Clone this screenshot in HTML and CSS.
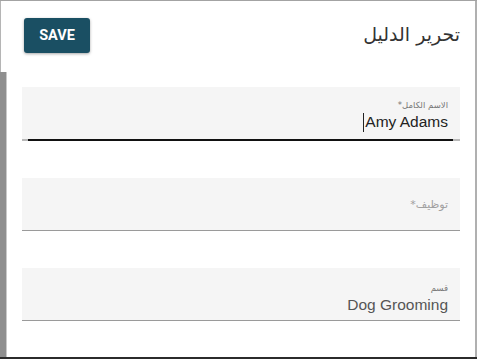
FILE: index.html
```html
<!DOCTYPE html>
<html lang="ar">
<head>
<meta charset="utf-8">
<link rel="stylesheet" href="styles.css">
</head>
<body>
<div class="frame">
  <div class="strip">
    <div class="strip-top"></div>
    <div class="strip-bottom"></div>
  </div>
  <div class="dialog">
    <div class="header">
      <button class="save">SAVE</button>
      <h1 class="title" dir="rtl">تحرير الدليل</h1>
    </div>
    <div class="fields">
      <div class="field focused" dir="rtl">
        <div class="field-body">
          <div class="label">الاسم الكامل*</div>
          <div class="value"><span dir="ltr" class="ltr"><span class="caret"></span>Amy Adams</span></div>
        </div>
        <div class="underline"><div class="underline-active"></div></div>
      </div>
      <div class="field" dir="rtl">
        <div class="field-body center">
          <div class="placeholder">توظيف*</div>
        </div>
      </div>
      <div class="field" dir="rtl">
        <div class="field-body">
          <div class="label">قسم</div>
          <div class="value muted"><span dir="ltr" class="ltr">Dog Grooming</span></div>
        </div>
      </div>
    </div>
  </div>
</div>
</body>
</html>
```

FILE: styles.css
```css
html, body {
  margin: 0;
  padding: 0;
  background: #fff;
}
body {
  width: 477px;
  height: 359px;
  overflow: hidden;
  font-family: "Liberation Sans", "DejaVu Sans", Arial, sans-serif;
}
.frame {
  display: flex;
  height: 359px;
  box-sizing: border-box;
  border-top: 1px solid #a3a3a3;
  border-bottom: 2px solid #2b2b2b;
}
.strip {
  width: 7px;
  display: flex;
  flex-direction: column;
}
.strip-top {
  height: 71px;
  border-left: 1px solid #b5b5b5;
  background: #fff;
}
.strip-bottom {
  flex: 1;
  background: #8f8f8f;
  border-right: 1px solid #c9c9c9;
}
.dialog {
  flex: 1;
  padding: 17px 15px 0 15px;
  border-right: 2px solid #b0b0b0;
  background: #fff;
}
.header {
  display: flex;
  justify-content: space-between;
  align-items: center;
  height: 35px;
  padding-left: 2px;
}
.save {
  width: 66px;
  height: 35px;
  border: none;
  border-radius: 3px;
  background: #1a4f63;
  color: #fff;
  font-family: Roboto, "Liberation Sans", sans-serif;
  font-weight: 700;
  font-size: 14.5px;
  padding: 0;
  box-shadow: 0 1px 3px rgba(0, 0, 0, 0.35);
}
.title {
  margin: 0 0 3px 0;
  font-size: 19px;
  font-weight: 400;
  color: #333;
  font-family: "DejaVu Sans", sans-serif;
  line-height: 24px;
}
.fields {
  margin-top: 34px;
  display: flex;
  flex-direction: column;
  gap: 37px;
}
.field {
  background: #f5f5f5;
  border-bottom: 1px solid #9a9a9a;
}
.field.focused {
  border-bottom: none;
}
.field-body {
  height: 52px;
  box-sizing: border-box;
  padding: 12px 12px 0 12px;
}
.field:last-child .field-body {
  padding-top: 14px;
}
.field-body.center {
  display: flex;
  align-items: center;
  padding-top: 0;
}
.label {
  font-size: 8.5px;
  line-height: 12px;
  color: #777;
  font-family: "DejaVu Sans", sans-serif;
}
.value {
  font-size: 15.5px;
  line-height: 22px;
  color: #222;
  font-family: "Liberation Sans", Arial, sans-serif;
}
.value.muted {
  color: #555;
}
.ltr {
  display: inline-flex;
  align-items: center;
}
.caret {
  display: inline-block;
  width: 1px;
  height: 19px;
  background: #222;
  margin-right: 1px;
}
.placeholder {
  font-size: 11px;
  color: #a0a0a0;
  font-family: "DejaVu Sans", sans-serif;
}
.underline {
  height: 2px;
  background: #b8b8b8;
  display: flex;
}
.underline-active {
  flex: 1;
  margin: 0 7px 0 6px;
  background: #111;
}
```
